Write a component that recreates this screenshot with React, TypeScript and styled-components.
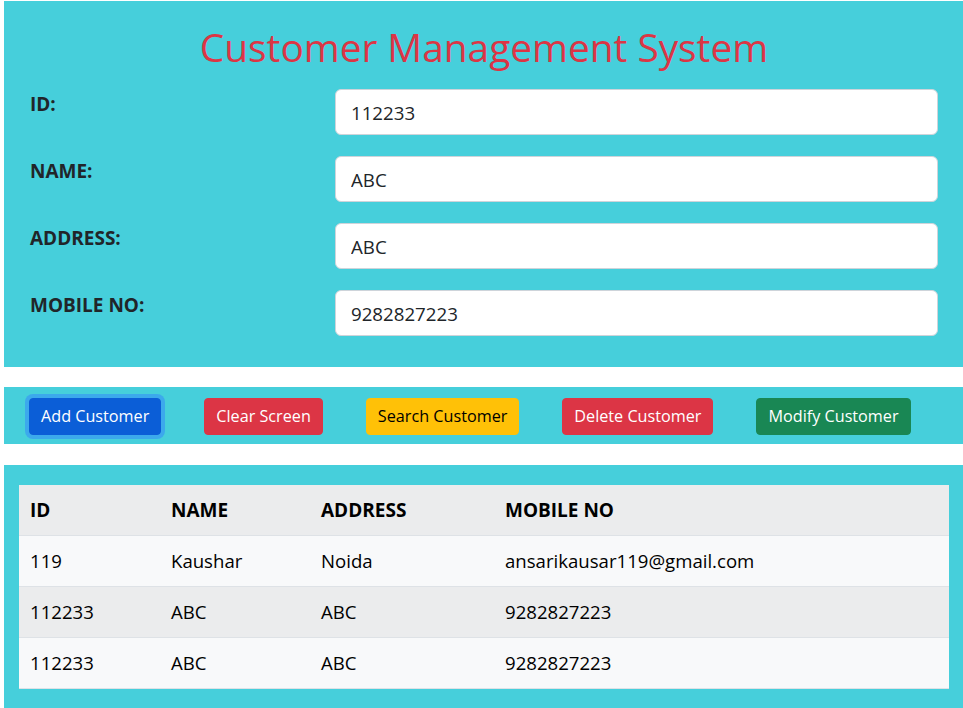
import React from "react";
import styled, { createGlobalStyle } from "styled-components";

const Global = createGlobalStyle`
  html, body { margin: 0; padding: 0; background: #ffffff; }
  body { font-family: "Open Sans", "Noto Sans", sans-serif; color: #212529; overflow: hidden; }
`;

const CYAN = "#46cfdb";

const Page = styled.div`
  width: 960px;
  margin: 1px 0 0 4px;
  display: flex;
  flex-direction: column;
`;

const FormPanel = styled.section`
  background: ${CYAN};
  padding: 22px 26px 31px 26px;
  display: flex;
  flex-direction: column;
`;

const Title = styled.h1`
  margin: 0 0 18px 0;
  text-align: center;
  color: #dc3545;
  font-weight: 400;
  font-size: 38.8px;
  line-height: 48px;
`;

const FieldList = styled.div`
  display: flex;
  flex-direction: column;
  gap: 21px;
`;

const FieldRow = styled.div`
  display: grid;
  grid-template-columns: 305px 1fr;
  align-items: start;
`;

const Label = styled.label`
  font-weight: 700;
  font-size: 19px;
  line-height: 26px;
  padding-top: 2px;
  color: #212529;
`;

const Input = styled.input`
  height: 46px;
  box-sizing: border-box;
  width: 100%;
  border: 1px solid #ced4da;
  border-radius: 6px;
  background: #fff;
  padding: 0 15px;
  font-family: "Open Sans", "Noto Sans", sans-serif;
  font-size: 18.7px;
  color: #212529;
  outline: none;
`;

const ButtonBar = styled.div`
  margin-top: 20px;
  background: ${CYAN};
  height: 57px;
  padding: 0 0 0 25px;
  box-sizing: border-box;
  display: flex;
  align-items: center;
  gap: 43px;
`;

const variants: Record<string, { bg: string; fg: string }> = {
  primary: { bg: "#0b5ed7", fg: "#ffffff" },
  danger: { bg: "#dc3545", fg: "#ffffff" },
  warning: { bg: "#ffc107", fg: "#000000" },
  success: { bg: "#198754", fg: "#ffffff" },
};

const Button = styled.button<{ $variant: string; $focused?: boolean }>`
  height: 37px;
  margin-top: 1px;
  padding: 0 11px;
  border: 1px solid ${(p) => variants[p.$variant].bg};
  border-radius: 4px;
  background: ${(p) => variants[p.$variant].bg};
  color: ${(p) => variants[p.$variant].fg};
  font-family: "Open Sans", "Noto Sans", sans-serif;
  font-size: 16.2px;
  line-height: 24px;
  white-space: nowrap;
  cursor: pointer;
  box-shadow: ${(p) => (p.$focused ? "0 0 0 4px rgba(49,132,253,0.5)" : "none")};
`;

const TablePanel = styled.section`
  margin-top: 21px;
  background: ${CYAN};
  padding: 20px 15px 20px 15px;
`;

const Table = styled.table`
  width: 100%;
  border-collapse: collapse;
  table-layout: fixed;
  font-size: 18.6px;
  color: #000;
`;

const HeadCell = styled.th<{ $w?: number }>`
  box-sizing: border-box;
  text-align: left;
  font-weight: 700;
  font-size: 19px;
  height: 50px;
  padding: 0 11px;
  background: #ebeced;
  border-bottom: 1px solid #dee2e6;
  width: ${(p) => (p.$w ? `${p.$w}px` : "auto")};
`;

const Row = styled.tr<{ $shade: boolean }>`
  background: ${(p) => (p.$shade ? "#ebeced" : "#f8f9fa")};
`;

const Cell = styled.td`
  height: 50px;
  padding: 0 11px;
  border-bottom: 1px solid #dee2e6;
  white-space: nowrap;
`;

const fields = [
  { label: "ID:", value: "112233" },
  { label: "NAME:", value: "ABC" },
  { label: "ADDRESS:", value: "ABC" },
  { label: "MOBILE NO:", value: "9282827223" },
];

const buttons = [
  { text: "Add Customer", variant: "primary", focused: true },
  { text: "Clear Screen", variant: "danger" },
  { text: "Search Customer", variant: "warning" },
  { text: "Delete Customer", variant: "danger" },
  { text: "Modify Customer", variant: "success" },
];

const rows = [
  ["119", "Kaushar", "Noida", "ansarikausar119@gmail.com"],
  ["112233", "ABC", "ABC", "9282827223"],
  ["112233", "ABC", "ABC", "9282827223"],
];

export default function App() {
  return (
    <>
      <Global />
      <Page>
        <FormPanel>
          <Title>Customer Management System</Title>
          <FieldList>
            {fields.map((f) => (
              <FieldRow key={f.label}>
                <Label>{f.label}</Label>
                <Input defaultValue={f.value} />
              </FieldRow>
            ))}
          </FieldList>
        </FormPanel>
        <ButtonBar>
          {buttons.map((b) => (
            <Button key={b.text} $variant={b.variant} $focused={b.focused}>
              {b.text}
            </Button>
          ))}
        </ButtonBar>
        <TablePanel>
          <Table>
            <thead>
              <tr>
                <HeadCell $w={141}>ID</HeadCell>
                <HeadCell $w={150}>NAME</HeadCell>
                <HeadCell $w={184}>ADDRESS</HeadCell>
                <HeadCell>MOBILE NO</HeadCell>
              </tr>
            </thead>
            <tbody>
              {rows.map((r, i) => (
                <Row key={i} $shade={i % 2 === 1}>
                  {r.map((c, j) => (
                    <Cell key={j}>{c}</Cell>
                  ))}
                </Row>
              ))}
            </tbody>
          </Table>
        </TablePanel>
      </Page>
    </>
  );
}
